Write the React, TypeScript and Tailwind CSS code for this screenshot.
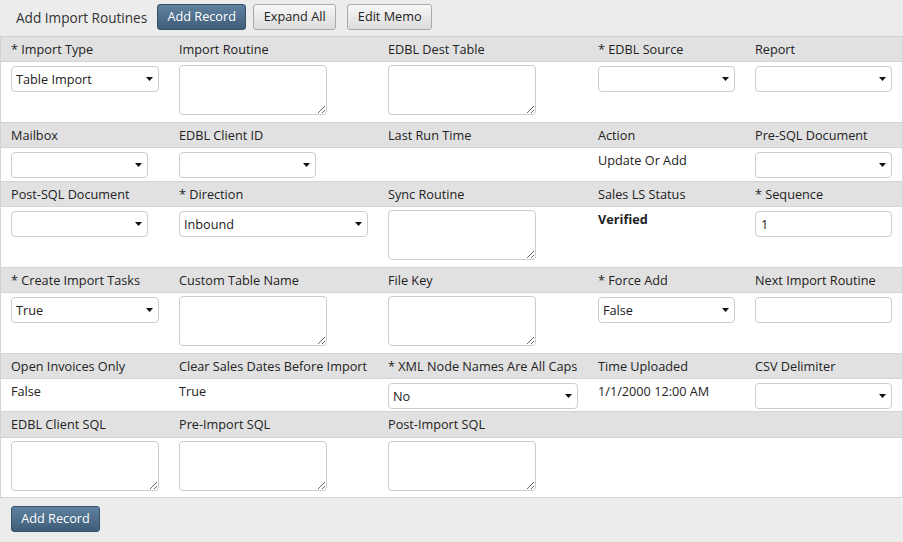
import React from 'react';

const font = { fontFamily: '"Open Sans", "Liberation Sans", Arial, sans-serif' };

function Arrow() {
    return (
        <svg className="pointer-events-none absolute right-[6px] top-1/2 -translate-y-1/2" width="7" height="4" viewBox="0 0 7 4">
            <path d="M0 0 L7 0 L3.5 4 Z" fill="#111" />
        </svg>
    );
}

function Select({ value = '', w }: { value?: string; w: string }) {
    return (
        <div className={`relative mt-[1px] h-[26px] ${w}`}>
            <div className="flex h-full w-full items-center rounded-[4px] border border-[#cccccc] bg-white pl-[4px] pt-[1px] text-[12.7px] text-[#222]">
                {value}
            </div>
            <Arrow />
        </div>
    );
}

function Area({ w = 'w-[148px]' }: { w?: string }) {
    return (
        <textarea
            className={`block h-[50px] ${w} rounded-[4px] border border-[#cccccc] bg-white outline-none`}
            defaultValue=""
        />
    );
}

function Input({ value = '' }: { value?: string }) {
    return (
        <div className="mt-[1px] flex h-[26px] w-[137px] items-center rounded-[4px] border border-[#cccccc] bg-white pl-[5px] pt-[1px] text-[12.7px] text-[#222]">
            {value}
        </div>
    );
}

function Text({ children, bold }: { children: React.ReactNode; bold?: boolean }) {
    return <div className={`leading-[18px] text-[12.7px] text-[#222] ${bold ? 'font-bold' : ''}`}>{children}</div>;
}

const cols = 'grid grid-cols-[168px_209px_210px_157px_157px]';

function Header({ labels, h = 'h-[25px]' }: { labels: string[]; h?: string }) {
    return (
        <div className={`${cols} ${h} items-center border-b border-[#d4d4d4] bg-[#e1e1e1] pt-[1px] text-[12.7px] text-[#222]`}>
            {labels.map((l, i) => (
                <div key={i} className="pl-[10px]">{l}</div>
            ))}
        </div>
    );
}

function Body({ h, cells }: { h: string; cells: React.ReactNode[] }) {
    return (
        <div className={`${cols} ${h} border-b border-[#d4d4d4] bg-white`}>
            {cells.map((c, i) => (
                <div key={i} className="pl-[10px] pt-[3px]">{c}</div>
            ))}
        </div>
    );
}

function BlueButton({ children }: { children: React.ReactNode }) {
    return (
        <button className="h-[26px] w-[89px] rounded-[3px] border border-[#34526c] bg-gradient-to-b from-[#61829f] to-[#3e5d79] text-[12.7px] text-white">
            {children}
        </button>
    );
}

function GrayButton({ children, w }: { children: React.ReactNode; w: string }) {
    return (
        <button className={`h-[26px] ${w} rounded-[3px] border border-[#aaaaaa] bg-gradient-to-b from-[#f7f7f7] to-[#dcdcdc] text-[12.7px] text-[#222]`}>
            {children}
        </button>
    );
}

export default function App() {
    return (
        <div className="h-[542px] w-[903px] overflow-hidden bg-[#ececec]" style={font}>
            <div className="flex h-[37px] items-center border-b border-[#cfcfcf] pl-[16px]">
                <span className="mr-[10px] text-[13.6px] text-[#333]">Add Import Routines</span>
                <div className="mt-[-2px] flex items-center">
                    <BlueButton>Add Record</BlueButton>
                    <span className="w-[7px]" />
                    <GrayButton w="w-[83px]">Expand All</GrayButton>
                    <span className="w-[11px]" />
                    <GrayButton w="w-[85px]">Edit Memo</GrayButton>
                </div>
            </div>

            <div className="w-[903px] border-r border-l border-[#d4d4d4]">
                <Header labels={['* Import Type', 'Import Routine', 'EDBL Dest Table', '* EDBL Source', 'Report']} />
                <Body
                    h="h-[61px]"
                    cells={[
                        <Select value="Table Import" w="w-[148px]" />,
                        <Area />,
                        <Area />,
                        <Select w="w-[137px]" />,
                        <Select w="w-[137px]" />,
                    ]}
                />

                <Header labels={['Mailbox', 'EDBL Client ID', 'Last Run Time', 'Action', 'Pre-SQL Document']} />
                <Body
                    h="h-[34px]"
                    cells={[
                        <Select w="w-[137px]" />,
                        <Select w="w-[137px]" />,
                        null,
                        <Text>Update Or Add</Text>,
                        <Select w="w-[137px]" />,
                    ]}
                />

                <Header labels={['Post-SQL Document', '* Direction', 'Sync Routine', 'Sales LS Status', '* Sequence']} />
                <Body
                    h="h-[61px]"
                    cells={[
                        <Select w="w-[137px]" />,
                        <Select value="Inbound" w="w-[189px]" />,
                        <Area />,
                        <Text bold>Verified</Text>,
                        <Input value="1" />,
                    ]}
                />

                <Header labels={['* Create Import Tasks', 'Custom Table Name', 'File Key', '* Force Add', 'Next Import Routine']} />
                <Body
                    h="h-[61px]"
                    cells={[
                        <Select value="True" w="w-[148px]" />,
                        <Area />,
                        <Area />,
                        <Select value="False" w="w-[137px]" />,
                        <Input />,
                    ]}
                />

                <Header labels={['Open Invoices Only', 'Clear Sales Dates Before Import', '* XML Node Names Are All Caps', 'Time Uploaded', 'CSV Delimiter']} />
                <Body
                    h="h-[33px]"
                    cells={[
                        <Text>False</Text>,
                        <Text>True</Text>,
                        <Select value="No" w="w-[190px]" />,
                        <Text>1/1/2000 12:00 AM</Text>,
                        <Select w="w-[137px]" />,
                    ]}
                />

                <Header h="h-[26px]" labels={['EDBL Client SQL', 'Pre-Import SQL', 'Post-Import SQL', '', '']} />
                <Body h="h-[60px]" cells={[<Area />, <Area />, <Area />, null, null]} />
            </div>

            <div className="pl-[11px] pt-[7px]">
                <BlueButton>Add Record</BlueButton>
            </div>
        </div>
    );
}
